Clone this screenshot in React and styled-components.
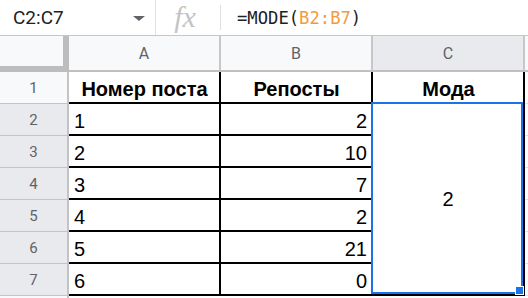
import React from "react";
import styled, { createGlobalStyle } from "styled-components";

const GlobalStyle = createGlobalStyle`
  html, body {
    margin: 0;
    padding: 0;
    background: #fff;
    overflow: hidden;
  }
  body {
    width: 528px;
    height: 298px;
  }
`;

const posts = [
  ["1", "2"],
  ["2", "10"],
  ["3", "7"],
  ["4", "2"],
  ["5", "21"],
  ["6", "0"],
];

const App = () => {
  return (
    <Page>
      <GlobalStyle />
      <FormulaBar>
        <NameBox>
          <span>C2:C7</span>
          <Caret />
        </NameBox>
        <FxBox>fx</FxBox>
        <Divider />
        <Formula>
          =MODE(<RangeRef>B2:B7</RangeRef>)
        </Formula>
      </FormulaBar>
      <Sheet>
        <Corner />
        <ColHeader>A</ColHeader>
        <ColHeader>B</ColHeader>
        <ColHeader $selected>C</ColHeader>
        <ColHeader $last />

        <RowHeader>1</RowHeader>
        <Cell $bold $align="center">Номер поста</Cell>
        <Cell $bold $align="center">Репосты</Cell>
        <Cell $bold $align="center">Мода</Cell>
        <EmptyCell />

        {posts.map((post, index) => (
          <React.Fragment key={index}>
            <RowHeader $selected>{index + 2}</RowHeader>
            <Cell>{post[0]}</Cell>
            <Cell $align="flex-end">{post[1]}</Cell>
            {index === 0 && (
              <MergedCell>
                2
                <Selection>
                  <Handle />
                </Selection>
              </MergedCell>
            )}
            <EmptyCell />
          </React.Fragment>
        ))}

        <RowHeader $tail />
      </Sheet>
    </Page>
  );
};

const Page = styled.div`
  width: 528px;
  height: 298px;
  overflow: hidden;
  font-family: Roboto, "Liberation Sans", Arial, sans-serif;
`;

const FormulaBar = styled.div`
  display: flex;
  align-items: center;
  height: 35px;
  border-bottom: 1px solid #c4c7c5;
`;

const NameBox = styled.div`
  display: flex;
  align-items: center;
  justify-content: space-between;
  box-sizing: border-box;
  width: 156px;
  height: 100%;
  padding: 0 10px 0 13px;
  border-right: 1px solid #e3e3e3;
  font-size: 19px;
  color: #202124;
`;

const Caret = styled.span`
  width: 0;
  height: 0;
  margin-top: 2px;
  border-left: 6px solid transparent;
  border-right: 6px solid transparent;
  border-top: 5px solid #5f6368;
`;

const FxBox = styled.div`
  display: flex;
  align-items: center;
  justify-content: center;
  width: 64px;
  height: 35px;
  padding: 0 6px 2px 0;
  box-sizing: border-box;
  font-family: "Liberation Serif", "DejaVu Serif", serif;
  font-style: italic;
  font-size: 30px;
  color: #c4c4c4;
`;

const Divider = styled.div`
  width: 1px;
  height: 25px;
  background: #e0e0e0;
`;

const Formula = styled.div`
  padding-left: 16px;
  font-family: "DejaVu Sans Mono", "Liberation Mono", monospace;
  font-size: 17.2px;
  color: #202124;
`;

const RangeRef = styled.span`
  color: #f29b3e;
`;

const Sheet = styled.div`
  display: grid;
  grid-template-columns: 69px 152px 152px 152px 1fr;
  grid-template-rows: 36px repeat(7, 32px) 1fr;
  height: 262px;
`;

const Corner = styled.div`
  box-sizing: border-box;
  background: #f8f9fa;
  border-right: 6px solid #bdbdbd;
  border-bottom: 6px solid #bdbdbd;
`;

const ColHeader = styled.div`
  display: flex;
  align-items: center;
  justify-content: center;
  box-sizing: border-box;
  background: ${(p) => (p.$selected ? "#e8eaed" : "#f8f9fa")};
  border-right: ${(p) => (p.$last ? "none" : "2px solid #c7c7c7")};
  border-bottom: 2px solid #c0c0c0;
  font-size: 16px;
  color: #5f6368;
`;

const RowHeader = styled.div`
  grid-column: 1;
  display: flex;
  align-items: center;
  justify-content: center;
  box-sizing: border-box;
  background: ${(p) => (p.$selected ? "#e8eaed" : "#f8f9fa")};
  border-right: 2px solid #c4c4c4;
  border-bottom: ${(p) => (p.$tail ? "none" : "1px solid #c4c4c4")};
  font-size: 15px;
  color: #5f6368;
`;

const Cell = styled.div`
  display: flex;
  align-items: flex-end;
  justify-content: ${(p) => p.$align || "flex-start"};
  box-sizing: border-box;
  padding: 0 4px 1px 5px;
  border-right: 2px solid #000;
  border-bottom: 2px solid #000;
  font-family: "Liberation Sans", Arial, sans-serif;
  font-size: 20px;
  font-weight: ${(p) => (p.$bold ? 700 : 400)};
  color: #000;
  white-space: nowrap;
`;

const EmptyCell = styled.div`
  grid-column: 5;
  border-bottom: 1px solid #e2e3e3;
`;

const MergedCell = styled.div`
  grid-column: 4;
  grid-row: 3 / span 6;
  position: relative;
  display: flex;
  align-items: center;
  justify-content: center;
  box-sizing: border-box;
  border-right: 2px solid #000;
  border-bottom: 2px solid #000;
  font-family: "Liberation Sans", Arial, sans-serif;
  font-size: 20px;
  color: #000;
`;

const Selection = styled.div`
  position: absolute;
  top: -2px;
  left: -2px;
  right: 0;
  bottom: 0;
  border: 2px solid #1a73e8;
  pointer-events: none;
`;

const Handle = styled.div`
  position: absolute;
  right: -3px;
  bottom: -3px;
  width: 7px;
  height: 7px;
  background: #1a73e8;
  border: 1px solid #fff;
`;

export default App;
